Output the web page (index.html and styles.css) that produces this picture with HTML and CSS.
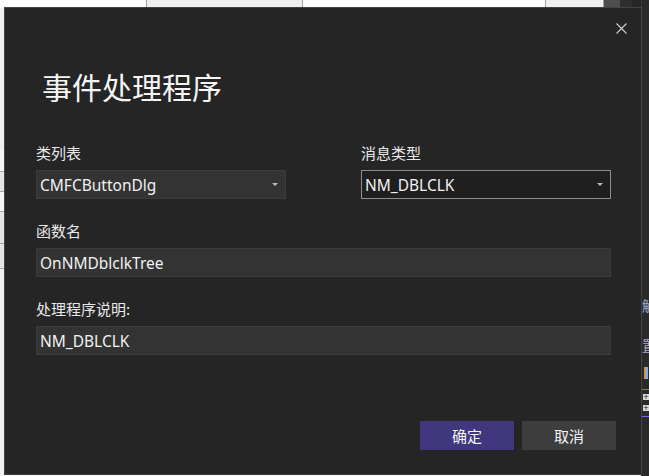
FILE: index.html
```html
<!DOCTYPE html>
<html lang="zh-CN">
<head>
<meta charset="utf-8">
<title>事件处理程序</title>
<link rel="stylesheet" href="styles.css">
</head>
<body>
<div class="backdrop">
  <div class="topbar">
    <div class="seg seg-white w146"></div>
    <div class="seg seg-gray w156"></div>
    <div class="seg seg-white w242"></div>
    <div class="seg seg-gray w59"></div>
    <div class="seg seg-mid w16"></div>
    <div class="seg seg-dark w12"></div>
    <div class="seg seg-darker"></div>
  </div>
  <div class="leftstrip">
    <div class="lrow h22"></div>
    <div class="lrow h20 lg"></div>
    <div class="lrow h20"></div>
    <div class="lrow h32 lg"></div>
    <div class="lrow h25 lg"></div>
  </div>
  <div class="rightstrip">
    <div class="rs-item rs-glyph g1">解</div>
    <div class="rs-item rs-glyph g2">置</div>
    <div class="rs-bar"></div>
    <div class="rs-line"></div>
    <div class="rs-plus p1">+</div>
    <div class="rs-plus p2">+</div>
    <div class="rs-line l2"></div>
  </div>
</div>

<div class="dialog">
  <button class="close" aria-label="关闭">
    <svg width="11" height="11" viewBox="0 0 11 11"><path d="M0.5 0.5 L10.5 10.5 M10.5 0.5 L0.5 10.5" stroke="#d0d0d0" stroke-width="1.1" fill="none"/></svg>
  </button>
  <h1 class="title">事件处理程序</h1>
  <div class="row2">
    <div class="field">
      <div class="label">类列表</div>
      <div class="combo">
        <span class="val">CMFCButtonDlg</span>
        <span class="arrow"></span>
      </div>
    </div>
    <div class="field">
      <div class="label">消息类型</div>
      <div class="combo focus">
        <span class="val">NM_DBLCLK</span>
        <span class="arrow"></span>
      </div>
    </div>
  </div>
  <div class="field gap">
    <div class="label">函数名</div>
    <div class="input"><span class="val">OnNMDblclkTree</span></div>
  </div>
  <div class="field gap">
    <div class="label">处理程序说明:</div>
    <div class="input"><span class="val">NM_DBLCLK</span></div>
  </div>
  <div class="footer">
    <button class="btn primary">确定</button>
    <button class="btn">取消</button>
  </div>
</div>
</body>
</html>
```

FILE: styles.css
```css
* { box-sizing: border-box; }
html, body { margin: 0; padding: 0; }
body {
  width: 649px;
  height: 476px;
  overflow: hidden;
  position: relative;
  background: #f0f0f0;
  font-family: "Noto Sans", "Noto Sans CJK SC", sans-serif;
}
.backdrop { position: absolute; inset: 0; }
.topbar { display: flex; height: 8px; }
.seg { height: 100%; }
.seg-white { background: #ffffff; }
.seg-gray { background: #f0f0f0; border-left: 1px solid #a0a0a0; border-right: 1px solid #a0a0a0; }
.seg-mid { background: #4e4e4e; }
.seg-dark { background: #2e2e2e; }
.seg-darker { background: #262626; flex: 1; }
.w146 { width: 146px; }
.w156 { width: 157px; }
.w242 { width: 242px; }
.w59 { width: 59px; }
.w16 { width: 16px; }
.w12 { width: 12px; }

.leftstrip {
  position: absolute; left: 0; top: 150px; width: 5px;
  display: flex; flex-direction: column;
}
.lrow { border-bottom: 1px solid #a8a8a8; background: #f6f6f6; }
.lrow.lg { background: #e4e4e4; }
.h22 { height: 22px; } .h20 { height: 20px; } .h32 { height: 32px; } .h25 { height: 25px; }

.rightstrip {
  position: absolute; right: 0; top: 0; width: 8px; height: 476px;
  background: #2a2a2a;
  border-left: 1px solid #3a3a3a;
  overflow: hidden;
}
.rs-glyph {
  position: absolute; left: 0; font-size: 14px; line-height: 14px;
  font-family: "Noto Sans CJK SC", sans-serif;
  color: #9ab0d0;
}
.g1 { top: 298px; }
.g2 { top: 338px; color: #b8a8c0; }
.rs-bar { position: absolute; left: 2px; top: 367px; width: 4px; height: 12px; background: linear-gradient(90deg, #e09040 50%, #6ab0ff 50%); }
.rs-line { position: absolute; left: 0; top: 389px; width: 8px; height: 1px; background: #7a6ae8; }
.rs-line.l2 { top: 416px; }
.rs-plus {
  position: absolute; left: 1px; width: 6px; height: 6px; background: #d8d8d8;
  color: #222; font-size: 7px; line-height: 6px; text-align: center;
  font-family: "DejaVu Sans", sans-serif;
}
.p1 { top: 394px; }
.p2 { top: 405px; }

.dialog {
  position: absolute;
  left: 4px; top: 7px;
  width: 638px; height: 468px;
  background: #252526;
  border: 1px solid #434343;
  padding: 58px 30px 0 31px;
  color: #f1f1f1;
}
.close {
  position: absolute; top: 15px; right: 14px;
  width: 11px; height: 11px; padding: 0; border: 0; background: transparent;
  display: flex;
}
.title {
  margin: 0;
  font-family: "Noto Sans CJK SC", sans-serif;
  font-weight: 400;
  font-size: 30px;
  line-height: 40px;
  color: #f5f5f5;
  padding-left: 6px;
}
.row2 {
  display: grid;
  grid-template-columns: 250px 250px;
  column-gap: 75px;
  margin-top: 37px;
}
.field { display: flex; flex-direction: column; }
.field.gap { margin-top: 22px; }
.label {
  font-family: "Noto Sans CJK SC", sans-serif;
  font-size: 15px;
  line-height: 20px;
  height: 20px;
  color: #e8e8e8;
  margin-bottom: 7px;
}
.combo, .input {
  height: 29px;
  background: #333333;
  border: 1px solid #3c3c3c;
  display: flex; align-items: center;
  padding: 0 7px 0 3px;
  position: relative;
}
.combo.focus { background: #1f1f1f; border-color: #8e8e8e; }
.val { font-size: 15.5px; color: #f1f1f1; line-height: 20px; flex: 1; }
.arrow {
  width: 0; height: 0;
  border-left: 3px solid transparent;
  border-right: 3px solid transparent;
  border-top: 3px solid #bdbdbd;
}
.footer {
  display: flex; justify-content: flex-end; gap: 8px;
  margin-top: 66px; margin-right: -5px;
}
.btn {
  width: 94px; height: 29px;
  border: 0; background: #3d3d3d; color: #f4f4f4;
  font-family: "Noto Sans CJK SC", sans-serif;
  font-size: 15px; line-height: 20px; padding: 0;
}
.btn.primary { background: #41377f; }
```
